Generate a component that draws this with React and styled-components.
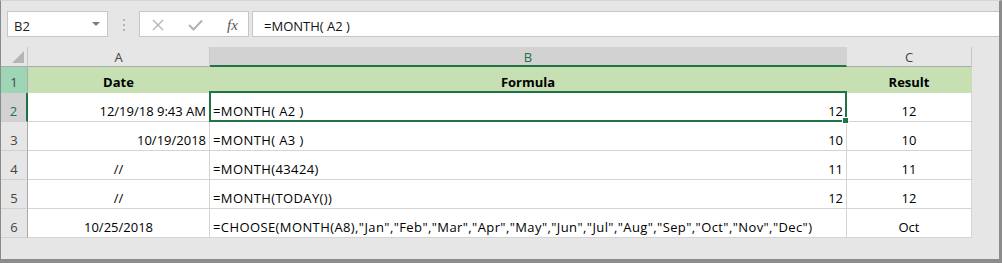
import React from 'react';
import styled, { createGlobalStyle } from 'styled-components';

const GlobalStyle = createGlobalStyle`
  html, body { margin: 0; padding: 0; background: #ffffff; }
  body { font-family: "Open Sans", "Noto Sans", sans-serif; font-size: 13px; line-height: 16px; }
`;

const GREEN = '#217346';
const GRID = '#d4d4d4';
const HEADER_FILL = '#c6e0b4';

const Window = styled.div`
  width: 1002px;
  height: 263px;
  box-sizing: border-box;
  background: #e6e6e6;
  border-top: 1px solid #d6d6d6;
  border-left: 1px solid #8a8a8a;
  border-right: 3px solid #8c8c8c;
  border-bottom: 4px solid #8c8c8c;
  padding-top: 10px;
  display: flex;
  flex-direction: column;
  overflow: hidden;
`;

const FormulaBar = styled.div`
  display: flex;
  height: 26px;
  padding-left: 6px;
`;

const Box = styled.div`
  box-sizing: border-box;
  background: #ffffff;
  border: 1px solid #c6c6c6;
  display: flex;
  align-items: center;
`;

const NameBox = styled(Box)`
  width: 101px;
  padding: 3px 7px 0 6px;
  justify-content: space-between;
  color: #222;
`;

const DropArrow = styled.span`
  width: 0;
  height: 0;
  margin-top: -3px;
  border-left: 4px solid transparent;
  border-right: 4px solid transparent;
  border-top: 4px solid #7a7a7a;
`;

const Grip = styled.div`
  width: 31px;
  display: flex;
  flex-direction: column;
  align-items: center;
  justify-content: center;
  gap: 3px;
  padding-top: 1px;
`;

const Dot = styled.span`
  width: 2px;
  height: 2px;
  background: #b4b4b4;
`;

const FxButtons = styled(Box)`
  width: 110px;
  padding: 2px 0 0 12px;
  gap: 24px;
`;

const FxLabel = styled.span`
  font-family: "Liberation Serif", serif;
  font-style: italic;
  font-size: 15px;
  color: #555;
`;

const FormulaInput = styled(Box)`
  flex: 1;
  margin-left: 3px;
  border-right: none;
  padding: 3px 0 0 11px;
  color: #111;
`;

const Sheet = styled.div`
  position: relative;
  margin-top: 10px;
  display: grid;
  grid-template-columns: 27px 182px 637px 125px;
  grid-template-rows: 20px 26px repeat(5, 29px);
  width: 971px;
`;

const Corner = styled.div`
  box-sizing: border-box;
  border-right: 1px solid #c8c8c8;
  border-bottom: 1px solid #ababab;
  display: flex;
  align-items: flex-end;
  justify-content: flex-end;
  padding: 0 3px 3px 0;
`;

const CornerTriangle = styled.span`
  width: 0;
  height: 0;
  border-left: 12px solid transparent;
  border-bottom: 12px solid #b5b5b5;
`;

const ColHead = styled.div`
  box-sizing: border-box;
  background: ${(p) => (p.$active ? '#d2d2d2' : '#e6e6e6')};
  border-right: 1px solid ${(p) => (p.$active ? '#d2d2d2' : '#c8c8c8')};
  border-bottom: ${(p) => (p.$active ? `2px solid ${GREEN}` : '1px solid #ababab')};
  color: ${(p) => (p.$active ? GREEN : '#444')};
  display: flex;
  align-items: center;
  justify-content: center;
  padding-top: 1px;
`;

const RowHead = styled.div`
  box-sizing: border-box;
  background: ${(p) => p.$bg || '#e6e6e6'};
  border-right: ${(p) => (p.$active ? `2px solid ${GREEN}` : '1px solid #ababab')};
  border-bottom: 1px solid ${(p) => p.$line || '#d0d0d0'};
  color: ${(p) => (p.$active ? GREEN : '#444')};
  display: flex;
  align-items: flex-end;
  justify-content: center;
  padding-bottom: 2px;
`;

const Cell = styled.div`
  box-sizing: border-box;
  background: ${(p) => p.$fill || '#ffffff'};
  border-right: 1px solid ${(p) => p.$fill || GRID};
  border-bottom: 1px solid ${(p) => p.$fill || GRID};
  font-weight: ${(p) => (p.$bold ? 700 : 400)};
  color: #000;
  display: flex;
  align-items: flex-end;
  justify-content: ${(p) => p.$align || 'flex-start'};
  padding: 0 3px 2px 3px;
  white-space: nowrap;
`;

const FormulaText = styled.span`
  letter-spacing: 0.4px;
`;

const Selection = styled.div`
  position: absolute;
  left: 208px;
  top: 44px;
  width: 638px;
  height: 31px;
  box-sizing: border-box;
  border: 2px solid ${GREEN};
  pointer-events: none;
`;

const FillHandle = styled.span`
  position: absolute;
  right: -3px;
  bottom: -3px;
  width: 5px;
  height: 5px;
  background: ${GREEN};
  outline: 1px solid #ffffff;
`;

const rows = [
  { n: 2, date: '12/19/18 9:43 AM', dateAlign: 'flex-end', formula: '=MONTH( A2 )', value: '12', result: '12' },
  { n: 3, date: '10/19/2018', dateAlign: 'flex-end', formula: '=MONTH( A3 )', value: '10', result: '10' },
  { n: 4, date: '//', dateAlign: 'center', formula: '=MONTH(43424)', value: '11', result: '11' },
  { n: 5, date: '//', dateAlign: 'center', formula: '=MONTH(TODAY())', value: '12', result: '12' },
  {
    n: 6,
    date: '10/25/2018',
    dateAlign: 'center',
    formula: '=CHOOSE(MONTH(A8),"Jan","Feb","Mar","Apr","May","Jun","Jul","Aug","Sep","Oct","Nov","Dec")',
    value: '',
    result: 'Oct',
  },
];

const FormulaCell = ({ formula, value }) => (
  <Cell $align="space-between">
    <FormulaText>{formula}</FormulaText>
    <span>{value}</span>
  </Cell>
);

const CrossIcon = () => (
  <svg width="12" height="12" viewBox="0 0 12 12">
    <path d="M1 1 L11 11 M11 1 L1 11" stroke="#b3b3b3" strokeWidth="1.3" fill="none" />
  </svg>
);

const CheckIcon = () => (
  <svg width="15" height="12" viewBox="0 0 15 12">
    <path d="M1 6 L5.5 10.5 L14 1.5" stroke="#b3b3b3" strokeWidth="2" fill="none" />
  </svg>
);

export default function App() {
  return (
    <>
      <GlobalStyle />
      <Window>
        <FormulaBar>
          <NameBox>
            <span>B2</span>
            <DropArrow />
          </NameBox>
          <Grip>
            <Dot />
            <Dot />
            <Dot />
          </Grip>
          <FxButtons>
            <CrossIcon />
            <CheckIcon />
            <FxLabel>fx</FxLabel>
          </FxButtons>
          <FormulaInput>=MONTH( A2 )</FormulaInput>
        </FormulaBar>

        <Sheet>
          <Corner>
            <CornerTriangle />
          </Corner>
          <ColHead>A</ColHead>
          <ColHead $active>B</ColHead>
          <ColHead>C</ColHead>

          <RowHead $bg="#9fd5b7" $line="#9fd5b7">1</RowHead>
          <Cell $fill={HEADER_FILL} $bold $align="center">Date</Cell>
          <Cell $fill={HEADER_FILL} $bold $align="center">Formula</Cell>
          <Cell $fill={HEADER_FILL} $bold $align="center">Result</Cell>

          {rows.map((r) => (
            <React.Fragment key={r.n}>
              <RowHead $active={r.n === 2} $bg={r.n === 2 ? '#d2d2d2' : undefined}>{r.n}</RowHead>
              <Cell $align={r.dateAlign}>{r.date}</Cell>
              <FormulaCell formula={r.formula} value={r.value} />
              <Cell $align="center">{r.result}</Cell>
            </React.Fragment>
          ))}

          <Selection>
            <FillHandle />
          </Selection>
        </Sheet>
      </Window>
    </>
  );
}
